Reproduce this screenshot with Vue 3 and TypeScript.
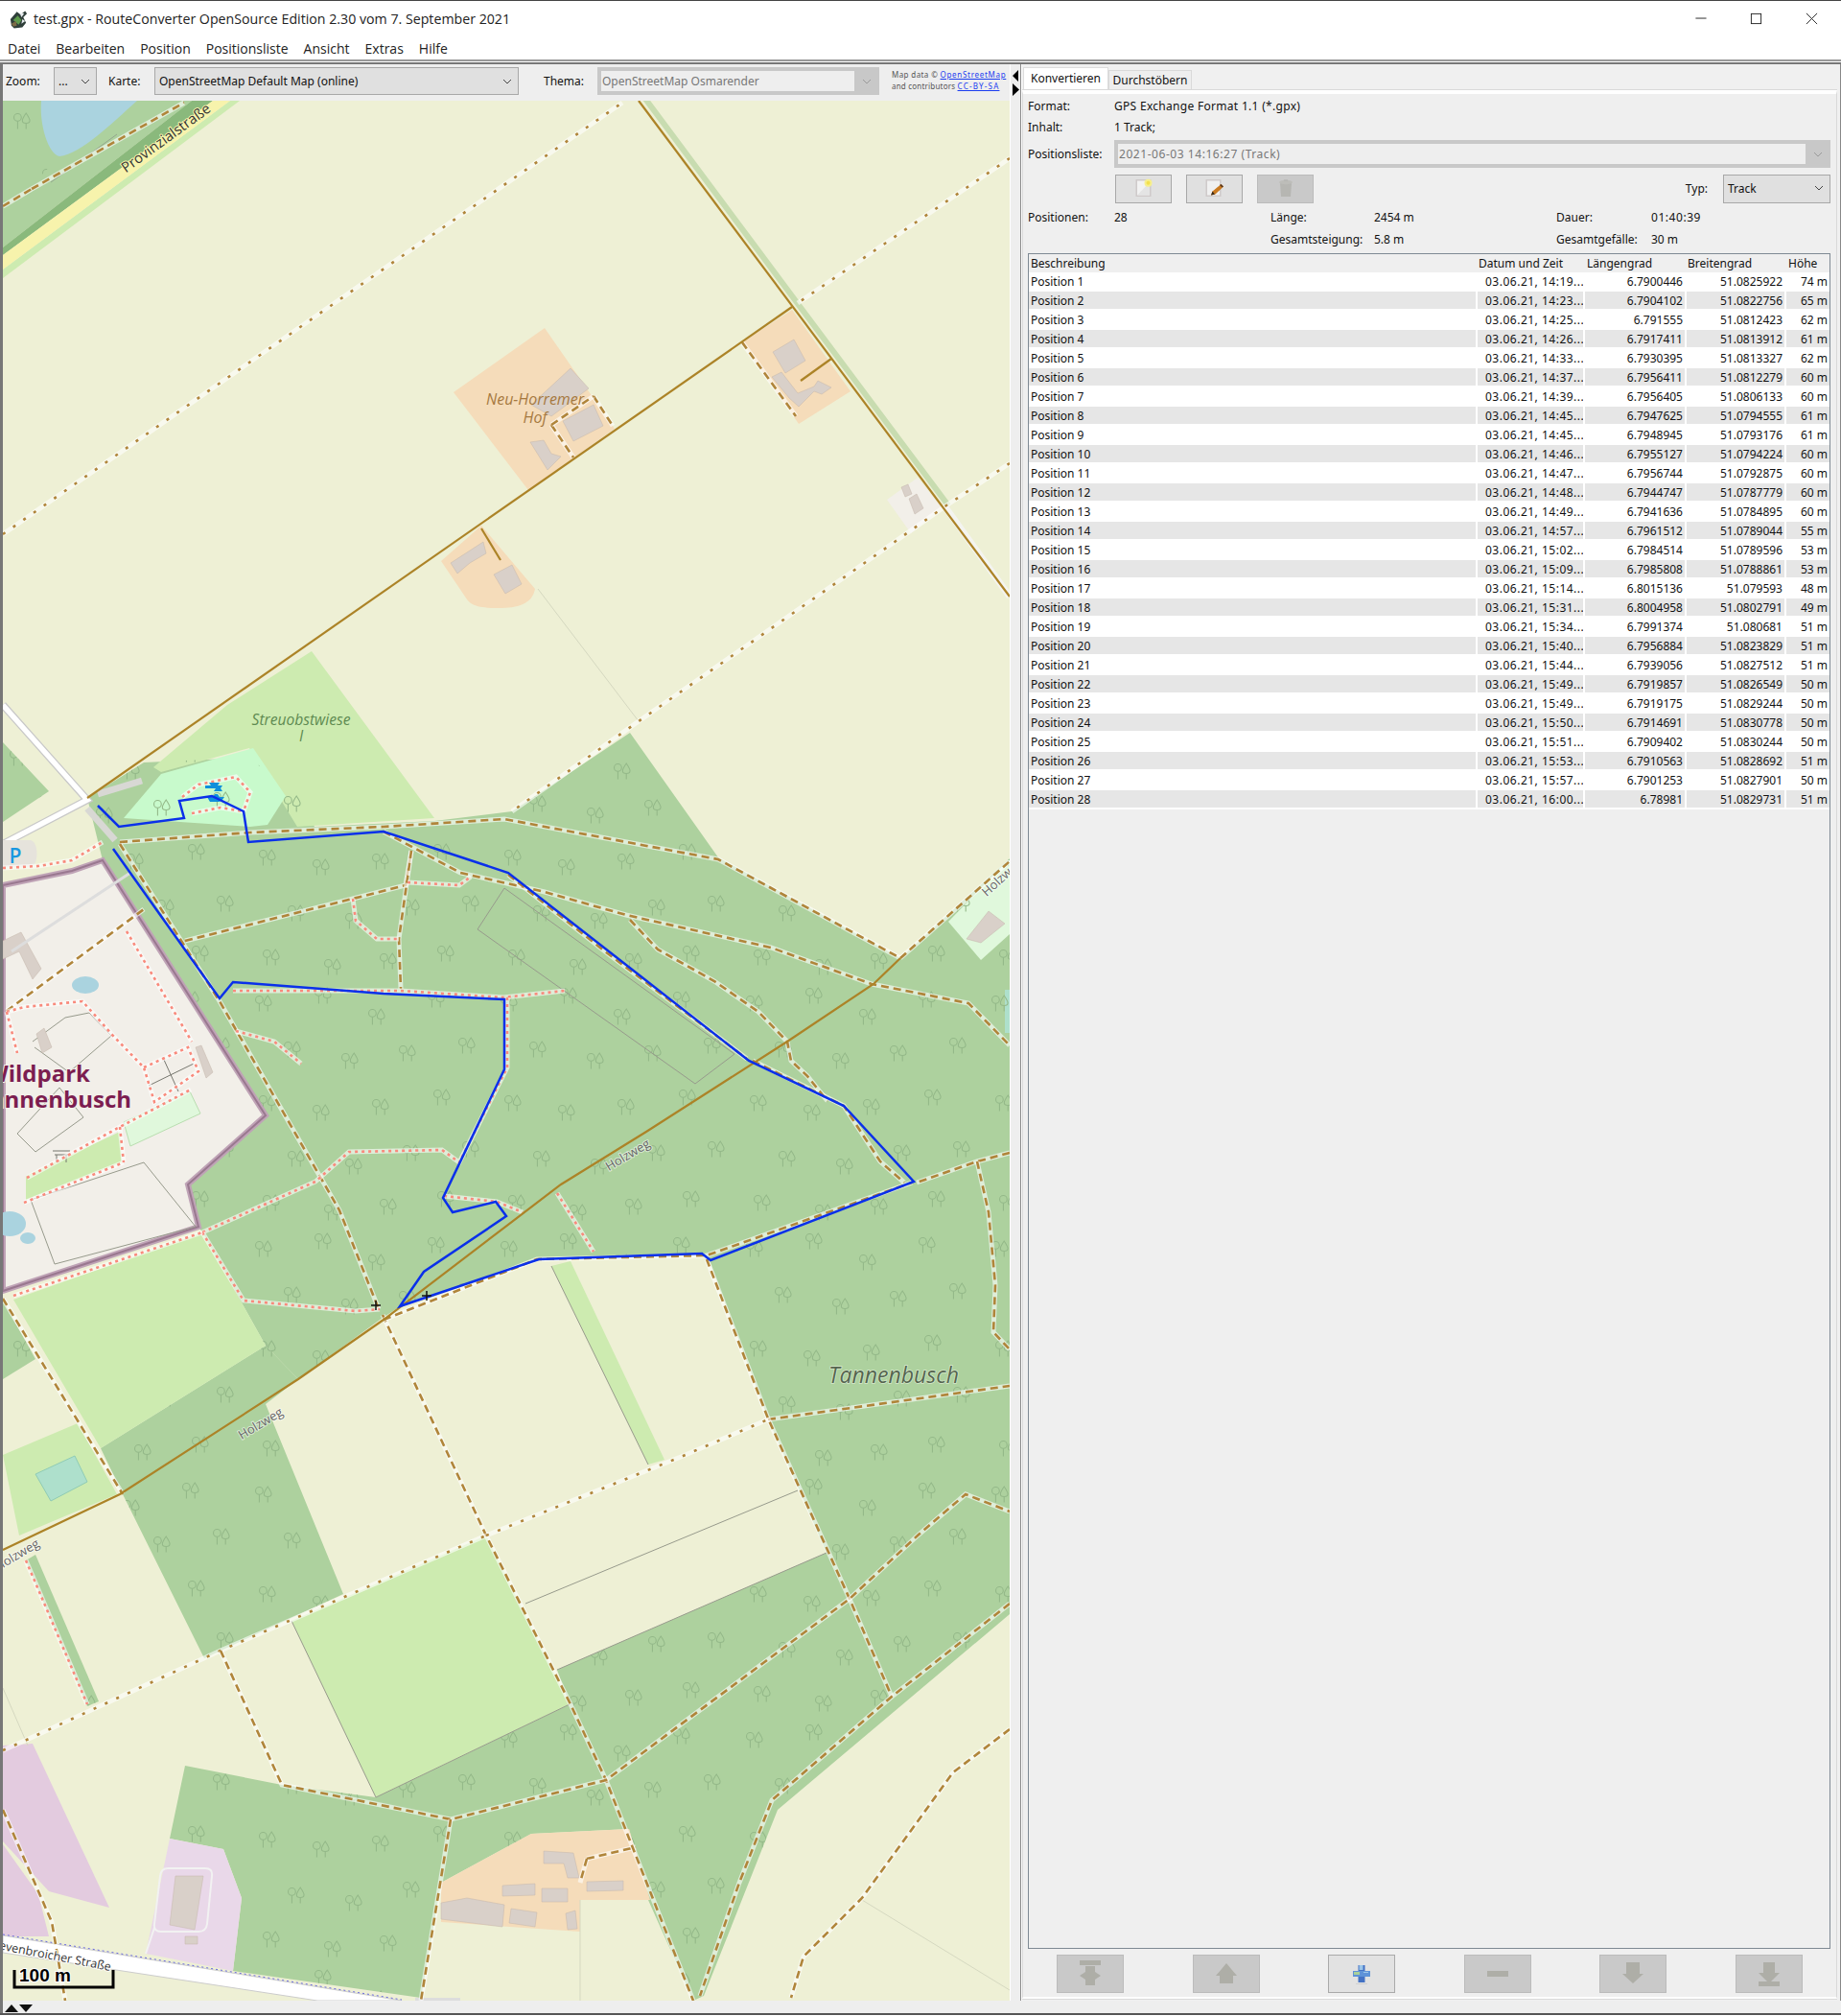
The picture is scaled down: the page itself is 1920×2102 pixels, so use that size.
<script setup lang="ts">
type Row = { name: string; time: string; lon: string; lat: string; ele: string };
type Track = { kind: string; pts: string };

// Position rows as they stand in the list
const raw = `14:19 6.7900446 51.0825922 74
14:23 6.7904102 51.0822756 65
14:25 6.791555 51.0812423 62
14:26 6.7917411 51.0813912 61
14:33 6.7930395 51.0813327 62
14:37 6.7956411 51.0812279 60
14:39 6.7956405 51.0806133 60
14:45 6.7947625 51.0794555 61
14:45 6.7948945 51.0793176 61
14:46 6.7955127 51.0794224 60
14:47 6.7956744 51.0792875 60
14:48 6.7944747 51.0787779 60
14:49 6.7941636 51.0784895 60
14:57 6.7961512 51.0789044 55
15:02 6.7984514 51.0789596 53
15:09 6.7985808 51.0788861 53
15:14 6.8015136 51.079593 48
15:31 6.8004958 51.0802791 49
15:34 6.7991374 51.080681 51
15:40 6.7956884 51.0823829 51
15:44 6.7939056 51.0827512 51
15:49 6.7919857 51.0826549 50
15:49 6.7919175 51.0829244 50
15:50 6.7914691 51.0830778 50
15:51 6.7909402 51.0830244 50
15:53 6.7910563 51.0828692 51
15:57 6.7901253 51.0827901 50
16:00 6.78981 51.0829731 51`;

const rows: Row[] = raw.split("\n").map((line, i) => {
  const [t, lon, lat, ele] = line.split(" ");
  return { name: `Position ${i + 1}`, time: `03.06.21, ${t}...`, lon, lat, ele: `${ele} m` };
});

const menus = ["Datei", "Bearbeiten", "Position", "Positionsliste", "Ansicht", "Extras", "Hilfe"];

// Map geometry, in page pixels (the svg viewBox starts at the map's corner)
const forests = [
  "3,105 200,105 3,258",
  "3,774 51,825 3,857",
  "91,832 150,795 260,790 311,830 328,862 453,856 534,846 657,764 749,894 939,999 1053,895 1053,1683 811,1887 734,2081 723,2086 676,1981 656,1907 554,1912 460,1963 439,2083 243,2055 252,1979 233,1928 177,1917 193,1841 294,1861 392,1874 594,1777 581,1741 862,1619 801,1479 740,1315 733,1308 561,1313 419,1361 399,1374 311,1438 277,1403 211,1285 207,1279 196,1235 277,1163 107,897",
  "105,1510 277,1403 311,1438 277,1464 358,1662 213,1729 128,1558",
  "3,1356 37,1417 3,1438",
  "27,1627 37,1621 103,1774 91,1779",
];
const meadows = [
  "237,735 325,679 453,853 310,862 260,780 168,805 160,800",
  "14,1355 211,1285 277,1403 105,1510",
  "3,1517 81,1484 122,1558 20,1601",
  "304,1690 507,1601 594,1777 392,1874",
  "575,1320 595,1315 693,1522 676,1527",
  "3,281 240,105 250,105 3,290",
];
const yards = [
  "568,342 641,447 551,511 473,409",
  "826,323 887,408 833,442 774,357",
  "460,1963 554,1912 656,1907 678,1981 605,1981 605,2014 460,2004",
];
const buildings = [
  "554,422 595,384 614,405 575,434",
  "587,439 619,422 629,444 598,460",
  "553,461 567,459 575,473 585,476 571,490",
  "806,367 828,354 840,376 819,389",
  "805,393 815,388 832,410 849,403 853,397 867,404 857,411 849,408 833,424 823,415",
  "470,587 504,565 507,577 490,587 477,598",
  "515,599 534,589 544,609 527,619",
  "940,508 947,505 951,515 944,518",
  "948,520 956,515 963,530 954,536",
  "460,1984 487,1979 526,1986 524,2009 460,2001",
  "533,1990 560,1994 558,2009 531,2005",
  "565,1969 592,1969 592,1983 565,1983",
  "524,1966 558,1964 558,1976 524,1977",
  "612,1962 650,1961 650,1971 612,1972",
  "567,1930 598,1932 604,1958 592,1958 588,1943 567,1943",
  "590,1995 600,1992 602,2011 592,2012",
  "183,1956 212,1956 203,2012 177,2007",
  "193,2019 206,2019 206,2027 193,2027",
  "3,981 22,972 43,1010 34,1021 20,992 3,1000",
  "38,1078 46,1072 54,1092 44,1098",
  "204,1092 210,1090 222,1118 215,1124",
  "1008,979 1031,950 1048,963 1023,983",
];
const greyLines = [
  "548,1672 832,1554",
  "581,1741 862,1619",
  "304,1690 392,1874",
  "392,1874 594,1777",
  "575,1320 676,1527",
  "526,926 766,1099 725,1130 498,969 526,926",
  "34,1086 68,1061 93,1056 116,1080 72,1118 36,1092",
  "18,1182 62,1134 87,1165 37,1201 18,1182",
  "32,1251 150,1212 204,1279 57,1318 32,1251",
];
const lightLines = ["561,614 666,752", "899,1981 1053,2075", "605,1981 605,2086", "3,1760 29,1820"];
const solidBrown = [
  "826,320 91,832",
  "666,105 1053,622",
  "939,999 911,1026 821,1086 674,1180 585,1235 400,1376 311,1438 125,1558 3,1616",
  "502,551 522,584",
  "835,397 867,374",
];

function t(kind: string, pts: string): Track {
  return { kind, pts };
}
const tracks: Track[] = [
  t("dot", "3,557 649,107"),
  t("dot", "1053,165 832,316"),
  t("dot", "1053,483 987,527 933,565 659,757 534,846"),
  t("dash", "33,197 192,107"),
  t("dash", "3,215 33,197"),
  t("dash", "619,413 639,444"),
  t("dash", "575,443 598,477"),
  t("dash", "575,443 619,413"),
  t("dash", "774,357 830,434"),
  t("dash", "612,1938 663,1926"),
  t("dash", "612,1938 605,1963"),
  t("dash", "399,1371 507,1601 595,1777 632,1856 723,2086"),
  t("dot", "3,1825 30,1813 230,1721 507,1601"),
  t("dot", "507,1601 710,1519 801,1480"),
  t("dash", "801,1480 1053,1445"),
  t("dash", "737,1313 801,1479 886,1667 930,1769"),
  t("dash", "230,1721 294,1861 470,1897 632,1856 886,1667 957,1601 1007,1558 1053,1576"),
  t("dash", "1053,1672 930,1769 805,1877 771,1963 730,2081"),
  t("dash", "470,1897 439,2086"),
  t("dash", "1053,1803 994,1848 899,1979 838,2040 825,2083"),
  t("dash", "3,1354 128,1558"),
  t("dash", "3,1887 54,2004 68,2086"),
  t("dash", "125,878 261,868 400,862 526,854 749,896 939,999"),
  t("dash", "400,867 480,910 568,930 653,954 804,988 909,1026 1010,1046 1053,1090"),
  t("dash", "530,912 631,992 779,1104"),
  t("dash", "785,1106 880,1153 918,1211 943,1233"),
  t("dash", "657,959 686,990 745,1023 791,1055 821,1086 825,1106 842,1122 863,1148"),
  t("dash", "193,981 368,937 423,923 429,887"),
  t("dash", "429,887 416,979 418,1031"),
  t("dash", "125,880 229,1044 354,1262 395,1365"),
  t("dash", "1053,1202 1019,1211 956,1233"),
  t("dash", "1019,1211 1031,1264 1038,1340 1036,1389 1053,1407"),
  t("dash", "400,1376 560,1313 737,1309 951,1233"),
  t("dash", "939,999 1053,898"),
  t("dash", "7,1054 150,948"),
  t("pink", "243,1033 418,1033 525,1040 589,1033"),
  t("pink", "529,1040 529,1113 479,1212 461,1199 364,1201 329,1232 211,1285"),
  t("pink", "463,1247 518,1253 545,1264"),
  t("pink", "211,1285 254,1356 371,1367 396,1365"),
  t("pink", "581,1244 619,1305"),
  t("pink", "246,1075 286,1086 314,1109"),
  t("pink", "368,937 371,960 393,979 416,979"),
  t("pink", "425,920 479,923 491,914"),
  t("pink", "14,1351 211,1285"),
  t("pink", "27,1627 91,1777"),
  t("pink", "3,905 40,903 75,897 107,878"),
  t("pink", "132,971 200,1086"),
  t("pink", "7,1055 25,1050 86,1044 118,1080 150,1113"),
  t("pink", "7,1055 18,1098"),
  t("pink", "150,1113 196,1092 207,1117 161,1149 150,1113"),
  t("pink", "28,1228 125,1175 199,1136"),
  t("pink", "25,1254 129,1212"),
  t("pink", "125,1175 129,1212"),
  t("pink", "190,831 207,818 246,810 261,826 254,846"),
  t("pink", "200,848 230,842 254,846"),
];

const route =
  "102,840 124,862 192,853 187,835 221,830 254,846 259,878 400,867 530,910 781,1106 880,1153 953,1232 741,1314 732,1307 562,1313 417,1362 442,1326 528,1268 517,1253 472,1264 462,1249 526,1115 526,1042 400,1036 243,1024 229,1041 118,885";

// Positions of the tree pairs inside one forest pattern tile
const trees: [number, number][] = [
  [10, 14], [72, 6], [128, 28], [190, 10], [40, 62], [100, 74], [160, 66], [222, 58],
  [14, 118], [70, 128], [132, 122], [196, 112], [44, 176], [104, 184], [164, 170], [226, 166],
  [18, 222], [82, 232], [140, 226], [200, 218],
];
</script>

<template>
  <div class="window">
    <header class="titlebar">
      <svg class="app-icon" viewBox="0 0 22 20">
        <path d="M2 10 9 2l4 3 5-4 2 3-4 4 3 6-4 5-9 1-3-3z" fill="#2f3f3a" />
        <path d="M5 11l5-5 4 5-3 5z" fill="#5d9a4c" />
        <path d="M12 3l5 1-3 4zM15 10l3 2-4 3z" fill="#e8ecef" />
        <path d="M3 15l5-3 1 5-4 1z" fill="#7b6a45" />
      </svg>
      <span class="title-text">test.gpx - RouteConverter OpenSource Edition 2.30 vom 7. September 2021</span>
      <div class="win-buttons">
        <svg viewBox="0 0 14 14"><path d="M1.500 6.500h12" /></svg>
        <svg viewBox="0 0 14 14"><rect x="1.500" y="1.500" width="11" height="11" /></svg>
        <svg viewBox="0 0 14 14"><path d="M1 1l12 12M13 1L1 13" /></svg>
      </div>
    </header>
    <nav class="menubar">
      <span v-for="m in menus" :key="m">{{ m }}</span>
    </nav>
    <div class="rule"></div>

    <main class="main">
      <section class="map-side">
        <div class="toolbar">
          <span class="lbl zoom-lbl">Zoom:</span>
          <div class="combo zoom-combo">
            <span>...</span>
            <svg class="chev" viewBox="0 0 10 6"><path d="M1 1l4 4 4-4" /></svg>
          </div>
          <span class="lbl karte-lbl">Karte:</span>
          <div class="combo karte-combo">
            <span>OpenStreetMap Default Map (online)</span>
            <svg class="chev" viewBox="0 0 10 6"><path d="M1 1l4 4 4-4" /></svg>
          </div>
          <span class="lbl thema-lbl">Thema:</span>
          <div class="combo off thema-combo">
            <span class="off-text">OpenStreetMap Osmarender</span>
            <svg class="chev" viewBox="0 0 10 6"><path d="M1 1l4 4 4-4" /></svg>
          </div>
          <div class="credits">
            <div><span class="map-data">Map data ©</span> <a>OpenStreetMap</a></div>
            <div>and contributors <a class="cc">CC-BY-SA</a></div>
          </div>
        </div>

        <svg class="map" viewBox="3 105 1050 1981" preserveAspectRatio="none">
          <defs>
            <pattern id="woods" width="256" height="256" patternUnits="userSpaceOnUse">
              <g v-for="(p, i) in trees" :key="i" :transform="`translate(${p[0]} ${p[1]}) scale(1.1)`" class="tree">
                <circle cx="4" cy="4" r="3.500" />
                <path d="M4 7.500V15" />
                <path d="M12 0c-2 3-3.500 5-3.500 7s2 2.500 3.500 2.500 3.500-.5 3.500-2.500S14 3 12 0zM12 9.500V15" />
              </g>
            </pattern>
          </defs>
          <g class="tiles">
            <rect x="3" y="105" width="1050" height="1981" fill="#eef0d5" />

            <polygon v-for="f in forests" :key="f" :points="f" fill="#add19e" />
            <path d="M43 105C41 130 50 160 62 163 85 160 115 130 143 105Z" fill="#aad3df" />
            <polygon v-for="m in meadows" :key="m" :points="m" fill="#cdebb0" />
            <polygon points="264,780 298,830 279,860 261,862 129,853 168,807" fill="#c8facc" />
            <polygon points="989,961 1053,895 1053,974 1023,1001" fill="#e0f8dc" />
            <rect x="1048" y="1032" width="5" height="45" fill="#aee0cc" />
            <polygon v-for="f in forests.slice(1)" :key="'w' + f" :points="f" fill="url(#woods)" />
            <polygon points="3,105 43,105 50,150 62,163 3,225" fill="url(#woods)" />

            <polygon points="3,258 200,105 222,105 3,266" fill="#8ab97c" />
            <polygon points="3,266 222,105 240,105 3,281" fill="#f7f3ac" />
            <polyline points="53,190 122,140" class="thin-line" />

            <polygon points="3,1820 34,1818 114,1989 51,1972 3,1920" fill="#e3cbdf" />
            <polygon points="3,1923 40,1975 51,2019 3,2019" fill="#e3cbdf" />
            <polygon points="177,1917 233,1928 252,1979 243,2055 152,2037" fill="#e9d8e9" />
            <polygon points="37,1537 78,1518 91,1545 53,1565" fill="#aee0cc" stroke="#8fcbb5" />
            <polygon points="957,498 982,529 950,556 925,521" fill="#f2efe9" />
            <path d="M460 585 502 548 558 614C555 630 540 634 520 634 495 634 490 630 485 622Z" fill="#f5dcba" />
            <polygon v-for="y in yards" :key="y" :points="y" fill="#f5dcba" />
            <path d="M175 1948H214Q222 1948 221 1956L216 2006Q215 2014 207 2014H168Q160 2014 161 2006L167 1956Q168 1948 175 1948ZM161 2010 152 2037" class="light-line wide" />

            <!-- Wildpark -->
            <polygon points="3,923 75,908 107,897 277,1163 196,1235 207,1279 3,1346" class="park" />
            <polygon points="3,923 75,908 107,897 277,1163 196,1235 207,1279 3,1346" class="park-edge" />
            <polygon points="3,923 75,908 107,897 277,1163 196,1235 207,1279 3,1346" class="park-core" />
            <ellipse cx="89" cy="1027" rx="14" ry="9" fill="#aad3df" />
            <ellipse cx="10" cy="1276" rx="17" ry="13" fill="#aad3df" />
            <ellipse cx="29" cy="1291" rx="8" ry="6" fill="#aad3df" />
            <polygon points="129,1170 198,1138 209,1161 136,1195" fill="#e0f8dc" stroke="#b9deb0" />
            <polygon points="27,1226 125,1180 127,1212 27,1251" fill="#cdebb0" />

            <polyline v-for="g in greyLines" :key="g" :points="g" class="grey-line" />
            <polyline v-for="l in lightLines" :key="l" :points="l" class="light-line" />
            <polygon v-for="b in buildings" :key="b" :points="b" class="building" />
            <polyline points="12,992 136,910" class="grey-road thin" />
            <path d="M171 1105l15 33M155 1132l47-23" class="grey-dark" />
            <path d="M55 1200h18M57 1204h14M59 1204v8M69 1204v8" class="grey-dark" />

            <!-- Roads -->
            <polyline points="3,735 91,834 3,880" class="road-casing" />
            <polyline points="3,735 91,834 3,880" class="white-road" />
            <polyline points="102,828 148,814" class="grey-road" />
            <polyline points="91,843 120,876" class="grey-road" />
            <path d="M3 876h28c10 0 10 28 0 28H3z" fill="#e6e3dc" />
            <polygon points="3,2018 419,2086 331,2086 3,2036" class="white-poly" />
            <polyline points="3,2017 419,2085" class="boundary" />
            <rect x="433" y="2083" width="47" height="3" fill="#ddd" />
            <polyline points="986,529 1053,622" class="white-edge" />
            <polyline points="670,105 830,320 986,529" class="hedge" />

            <template v-for="tr in tracks" :key="tr.pts">
              <polyline :points="tr.pts" class="casing" />
              <polyline :points="tr.pts" :class="tr.kind" />
            </template>
            <polyline v-for="s in solidBrown" :key="s" :points="s" class="solid" />

            <!-- Viewpoint marker in the park -->
            <path d="M214 819h6l-2-3h11l-2 3h5l-2 3 2 3h-9l2-3h-11zM216 831h6l2-3h3l2 3h5l-3 4-3 1h-9z" fill="#0f8fdb" />
          </g>

          <polyline :points="route" class="route" />
          <path d="M392 1356v10M387 1361h10M445 1346v10M440 1351h10" class="cross" />

          <text x="16" y="900" class="p-sign">P</text>
          <text x="94" y="1128" class="park-name">Wildpark</text>
          <text x="137" y="1155" class="park-name">Tannenbusch</text>
          <text transform="translate(176 148) rotate(-36)" class="road-name">Provinzialstraße</text>
          <text x="558" y="422" class="yard-name">Neu-Horremer</text>
          <text x="558" y="441" class="yard-name">Hof</text>
          <text x="314" y="756" class="green-name">Streuobstwiese</text>
          <text x="314" y="773" class="green-name">I</text>
          <text transform="translate(657 1208) rotate(-31)" class="way-name">Holzweg</text>
          <text transform="translate(274 1488) rotate(-31)" class="way-name">Holzweg</text>
          <text transform="translate(20 1625) rotate(-31)" class="way-name">Holzweg</text>
          <text transform="translate(1048 918) rotate(-42)" class="way-name">Holzweg</text>
          <text x="932" y="1442" class="forest-name">Tannenbusch</text>
          <text transform="translate(115 2055) rotate(11)" class="street-name">Grevenbroicher Straße</text>
          <path d="M15 2054v18h103v-18" class="scale-line" />
          <text x="20" y="2066" class="scale-text">100 m</text>
        </svg>
      </section>

      <div class="splitter">
        <svg viewBox="0 0 8 28">
          <path d="M7 1v12L1 7zM1 15v13l7-6.500z" />
        </svg>
      </div>

      <section class="side">
        <div class="tabs">
          <div class="tab active">Konvertieren</div>
          <div class="tab">Durchstöbern</div>
        </div>
        <div class="tab-body">
          <div class="form-row first"><span class="cap">Format:</span><span class="spaced">GPS Exchange Format 1.1 (*.gpx)</span></div>
          <div class="form-row"><span class="cap">Inhalt:</span><span>1 Track;</span></div>
          <div class="form-row list-row">
            <span class="cap">Positionsliste:</span>
            <div class="combo off list-combo">
              <span class="off-text wide">2021-06-03 14:16:27 (Track)</span>
              <svg class="chev" viewBox="0 0 10 6"><path d="M1 1l4 4 4-4" /></svg>
            </div>
          </div>
          <div class="action-row">
            <button class="tool">
              <svg viewBox="0 0 20 22">
                <path d="M1.500 1h16v18h-16z" fill="#cfcaca" />
                <path d="M3 2.500h13v15H3z" fill="#f2f2f2" />
                <path d="M3 17.500 16 4v13.500z" fill="#e4e4e4" />
                <circle cx="14.500" cy="4.700" r="4" fill="#f6ef8c" />
                <circle cx="14.500" cy="4.700" r="2" fill="#f3e04e" />
              </svg>
            </button>
            <button class="tool">
              <svg viewBox="0 0 20 22">
                <path d="M.5 1h16v18H.5z" fill="#cfcaca" />
                <path d="M2 2.500h13v15H2z" fill="#f0f0f0" />
                <path d="M6 17.500l1.500-4 9-7.500 2.500 2.500-8.500 8z" fill="#c9791f" />
                <path d="M6 17.500l1.500-4 2.500 3z" fill="#3a2a1a" />
                <path d="M16.500 6l2.500 2.500-1.500 1-2.500-2.500z" fill="#5a3a20" />
              </svg>
            </button>
            <button class="tool off-tool">
              <svg viewBox="0 0 20 22">
                <path d="M4 5h12l-1 14H5z" fill="#b6b6b2" />
                <ellipse cx="10" cy="4" rx="7" ry="2.200" fill="#bdbdb9" />
                <path d="M8 2.500h4v-1H8z" fill="#b0b0ac" />
              </svg>
            </button>
            <span class="typ">Typ:</span>
            <div class="combo typ-combo">
              <span>Track</span>
              <svg class="chev" viewBox="0 0 10 6"><path d="M1 1l4 4 4-4" /></svg>
            </div>
          </div>
          <div class="stats">
            <span>Positionen:</span><span>28</span><span>Länge:</span><span>2454 m</span><span>Dauer:</span><span class="wide">01:40:39</span>
            <span></span><span></span><span>Gesamtsteigung:</span><span>5.8 m</span><span>Gesamtgefälle:</span><span>30 m</span>
          </div>

          <div class="table">
            <div class="thead">
              <span class="h-desc">Beschreibung</span>
              <span class="h-date">Datum und Zeit</span>
              <span class="h-lon">Längengrad</span>
              <span class="h-lat">Breitengrad</span>
              <span class="h-ele">Höhe</span>
            </div>
            <div v-for="(r, i) in rows" :key="r.name" class="trow" :class="{ odd: i % 2 === 1 }">
              <span class="c-desc">{{ r.name }}</span>
              <span class="c-date">{{ r.time }}</span>
              <span class="c-num">{{ r.lon }}</span>
              <span class="c-num">{{ r.lat }}</span>
              <span class="c-num">{{ r.ele }}</span>
            </div>
          </div>

          <div class="footer-tools">
            <button class="big off-tool">
              <svg viewBox="0 0 24 40"><path d="M1 6h22v5H1zM7 12h10v6l6 4-6 4v6H7v-6l-6-4 6-4z" fill="#aeaea7" /></svg>
            </button>
            <button class="big off-tool">
              <svg viewBox="0 0 24 40"><path d="M12 9l11 13h-4v8H5v-8H1z" fill="#aeaea7" /></svg>
            </button>
            <button class="big live">
              <svg viewBox="0 0 24 40">
                <path d="M8.500 11h7v18h-7z" fill="#4472c4" />
                <path d="M3 17h18v6H3z" fill="#5f93d8" />
                <path d="M4 18h6v3H4z" fill="#a8d09a" />
                <path d="M14 18h5v1h-5zM9.500 11h4v5h-4z" fill="#9cc6ea" />
                <path d="M6 30h12v1H6z" fill="#cfcfcf" />
              </svg>
            </button>
            <button class="big off-tool">
              <svg viewBox="0 0 24 40"><path d="M1 17h22v6H1z" fill="#aeaea7" /></svg>
            </button>
            <button class="big off-tool">
              <svg viewBox="0 0 24 40"><path d="M5 8h14v12h4L12 30 1 20h4z" fill="#aeaea7" /></svg>
            </button>
            <button class="big off-tool">
              <svg viewBox="0 0 24 40"><path d="M6 8h12v11h5l-7 7-2 2h-4l-2-2-7-7h5zM1 28h22v5H1z" fill="#aeaea7" /></svg>
            </button>
          </div>
        </div>
      </section>
    </main>

    <div class="status">
      <svg viewBox="0 0 30 8"><path d="M0 8l7-8 7 8zM15 0h14l-7 8z" /></svg>
    </div>
    <div class="status-end"></div>
  </div>
</template>

<style scoped>
.window {
  width: 1920px;
  height: 2102px;
  display: flex;
  flex-direction: column;
  background: #fff;
  font-family: "Noto Sans", sans-serif;
  font-size: 12px;
  color: #111;
  overflow: hidden;
}
.titlebar {
  height: 37px;
  flex: none;
  display: flex;
  align-items: center;
  border-top: 1px solid #444;
  padding-left: 9px;
  font-family: "Open Sans", sans-serif;
  font-size: 14.200px;
  color: #222;
  box-sizing: content-box;
  position: relative;
}
.app-icon {
  width: 21px;
  height: 20px;
  margin-right: 5px;
}
.win-buttons {
  margin-left: auto;
  display: flex;
  gap: 45px;
  padding-right: 24px;
}
.win-buttons svg {
  width: 13px;
  height: 13px;
  fill: none;
  stroke: #222;
  stroke-width: 1;
}
.menubar {
  height: 24px;
  flex: none;
  display: flex;
  align-items: center;
  gap: 16px;
  padding-left: 8px;
  font-family: "Open Sans", sans-serif;
  font-size: 14px;
  color: #222;
}
.rule {
  height: 1px;
  flex: none;
  border-top: 2px solid #999;
  border-bottom: 2px solid #777;
  box-sizing: content-box;
}
.main {
  flex: 1;
  min-height: 0;
  display: flex;
  background: #eee;
  border-left: 3px solid #777;
  border-right: 1px solid #888;
}
.map-side {
  width: 1050px;
  flex: none;
  display: flex;
  flex-direction: column;
}
.toolbar {
  height: 38px;
  flex: none;
  display: flex;
  align-items: flex-start;
  padding-top: 3px;
  box-sizing: border-box;
  line-height: 29px;
}
.lbl {
  flex: none;
}
.zoom-lbl {
  margin-left: 3px;
  width: 50px;
}
.karte-lbl {
  margin-left: 12px;
  width: 48px;
}
.thema-lbl {
  margin-left: 26px;
  width: 56px;
}
.combo {
  height: 29px;
  box-sizing: border-box;
  flex: none;
  display: flex;
  align-items: center;
  justify-content: space-between;
  background: #e0e0e0;
  border: 1px solid #a8a8a8;
  padding: 0 6px 0 4px;
}
.chev {
  width: 10px;
  height: 6px;
  fill: none;
  stroke: #444;
  stroke-width: 1;
  flex: none;
}
.zoom-combo {
  width: 45px;
}
.karte-combo {
  width: 380px;
}
.thema-combo {
  width: 294px;
  margin-right: 13px;
}
.combo.off {
  background: #c8c8c8;
  border: 0;
  padding: 4px 8px 4px 4px;
}
.combo.off .chev {
  stroke: #9a9a9a;
}
.off-text {
  flex: 1;
  height: 100%;
  display: flex;
  align-items: center;
  background: #eee;
  color: #777;
  padding-left: 1px;
  margin-right: 8px;
}
.spaced {
  letter-spacing: 0.3px;
}
.wide {
  letter-spacing: 0.55px;
}
.credits {
  font-size: 8px;
  line-height: 12px;
  color: #555;
  white-space: nowrap;
  letter-spacing: 0.2px;
  margin-top: 2px;
}
.map-data {
  letter-spacing: 0.4px;
}
.credits a {
  color: #1a3cf0;
  text-decoration: underline;
  letter-spacing: 0.7px;
}
.credits a.cc {
  letter-spacing: 1.200px;
}
.map {
  display: block;
  width: 1050px;
  height: 1981px;
  flex: none;
  background: #eef0d5;
  font-family: "Open Sans", sans-serif;
}
.tiles {
  filter: blur(0.5px);
}
.tree {
  fill: none;
  stroke: #93b888;
  stroke-width: 1;
}
.park {
  fill: #f2efe9;
}
.park-edge {
  fill: none;
  stroke: #bfa3b6;
  stroke-width: 6;
}
.park-core {
  fill: none;
  stroke: #9a7890;
  stroke-width: 2;
}
.building {
  fill: #d9d0c9;
  stroke: #c4b6ab;
  stroke-width: 0.500;
}
.grey-line {
  fill: none;
  stroke: #979a8c;
  stroke-width: 1;
}
.grey-dark {
  fill: none;
  stroke: #77776f;
  stroke-width: 1;
}
.light-line {
  fill: none;
  stroke: #d5d8c0;
  stroke-width: 1;
}
.light-line.wide {
  stroke: #f2f2f2;
  stroke-width: 2;
}
.casing {
  fill: none;
  stroke: #fff;
  stroke-opacity: 0.6;
  stroke-width: 5;
}
.dash,
.dot,
.pink,
.solid {
  fill: none;
}
.dash {
  stroke: #b0853a;
  stroke-width: 2.600;
  stroke-dasharray: 8 5;
}
.dot {
  stroke: #b0853a;
  stroke-width: 2.600;
  stroke-dasharray: 3 10;
}
.pink {
  stroke: #f98a7c;
  stroke-width: 2.600;
  stroke-dasharray: 3 4;
}
.solid {
  stroke: #ac8327;
  stroke-width: 2.200;
}
.thin-line {
  fill: none;
  stroke: #8d9a8a;
  stroke-width: 0.800;
}
.road-casing {
  fill: none;
  stroke: #c8c8c8;
  stroke-width: 8;
}
.white-road {
  fill: none;
  stroke: #fff;
  stroke-width: 5.500;
}
.grey-road {
  fill: none;
  stroke: #d8d8d4;
  stroke-width: 7;
}
.grey-road.thin {
  stroke: #ddd;
  stroke-width: 3;
}
.white-poly {
  fill: #fff;
  stroke: #ccc;
}
.boundary {
  fill: none;
  stroke: #6a6ae0;
  stroke-dasharray: 2 3;
  stroke-width: 1;
}
.white-edge {
  fill: none;
  stroke: #f4f4f0;
  stroke-width: 7;
}
.hedge {
  fill: none;
  stroke: #c8dcb0;
  stroke-width: 6;
  transform: translate(3px, -2px);
}
.route {
  fill: none;
  stroke: #0a30ea;
  stroke-width: 2.500;
  stroke-linejoin: miter;
}
.cross {
  fill: none;
  stroke: #111;
  stroke-width: 1.500;
}
.p-sign {
  font-size: 21px;
  fill: #1a98e0;
  font-weight: 600;
  text-anchor: middle;
}
.park-name {
  font-size: 24px;
  font-weight: 700;
  fill: #7c1d50;
  text-anchor: end;
  paint-order: stroke;
  stroke: #f2efe9;
  stroke-width: 2;
}
.road-name {
  font-size: 14.800px;
  fill: #333;
  text-anchor: middle;
  paint-order: stroke;
  stroke: #f7f3ac;
  stroke-width: 2;
}
.yard-name {
  font-size: 16px;
  font-style: italic;
  fill: #a6793f;
  text-anchor: middle;
}
.green-name {
  font-size: 15.600px;
  font-style: italic;
  fill: #5e8a50;
  text-anchor: middle;
}
.way-name {
  font-size: 13px;
  fill: #666;
  text-anchor: middle;
  paint-order: stroke;
  stroke: #fff;
  stroke-width: 2;
  stroke-opacity: 0.55;
}
.forest-name {
  font-size: 23px;
  font-style: italic;
  fill: #55654f;
  text-anchor: middle;
  paint-order: stroke;
  stroke: #d6e8cc;
  stroke-width: 1.500;
}
.street-name {
  font-size: 12.500px;
  fill: #333;
  text-anchor: end;
  paint-order: stroke;
  stroke: #fff;
  stroke-width: 2;
}
.scale-line {
  fill: none;
  stroke: #000;
  stroke-width: 3;
}
.scale-text {
  font-family: "Liberation Sans", sans-serif;
  font-size: 19px;
  font-weight: 700;
  fill: #000;
  paint-order: stroke;
  stroke: #fff;
  stroke-width: 2;
}
.splitter {
  width: 11px;
  flex: none;
  padding-top: 5px;
  box-sizing: border-box;
  background: #eee;
  border-left: 1px solid #fff;
}
.splitter svg {
  width: 8px;
  height: 28px;
  display: block;
  margin-left: 1px;
  fill: #000;
}
.side {
  flex: 1;
  min-width: 0;
  display: flex;
  flex-direction: column;
  border-left: 1px solid #8a8a8a;
  background: #f0f0f0;
  padding-left: 1px;
  box-shadow: inset 1px 0 0 #fff;
}
.tabs {
  height: 25px;
  flex: none;
  display: flex;
  align-items: flex-end;
  padding-left: 1px;
  padding-top: 2px;
}
.tab {
  width: 87px;
  height: 21px;
  box-sizing: border-box;
  display: flex;
  align-items: center;
  justify-content: center;
  background: #eee;
  border: 1px solid #d9d9d9;
  border-bottom: 0;
  padding-bottom: 2px;
}
.tab.active {
  width: 89px;
  height: 24px;
  background: #fff;
  border-color: #ddd;
}
.tab-body {
  flex: 1;
  min-height: 0;
  display: flex;
  flex-direction: column;
  background: #efefef;
  border: 1px solid #d9d9d9;
  border-top: 4px solid #fff;
  border-bottom: 2px solid #fff;
  margin: 0 3px 2px 0;
  padding: 1px 6px 4px 5px;
  box-shadow: 0 -1px 0 #d9d9d9, 0 1px 0 #d9d9d9;
}
.form-row {
  height: 22px;
  flex: none;
  display: flex;
  align-items: center;
}
.cap {
  width: 90px;
  flex: none;
}
.list-row {
  height: 29px;
  margin-top: 3px;
}
.list-combo {
  width: 747px;
}
.action-row {
  height: 30px;
  flex: none;
  margin-top: 7px;
  display: flex;
  align-items: center;
  padding-left: 91px;
}
.tool {
  width: 59px;
  height: 30px;
  margin-right: 15px;
  padding: 0;
  display: flex;
  align-items: center;
  justify-content: center;
  background: #e0e0e0;
  border: 1px solid #a8a8a8;
}
.tool svg {
  width: 20px;
  height: 22px;
}
.off-tool {
  background: #c9c9c9;
  border-color: #bbb;
}
.typ {
  margin-left: auto;
  margin-right: 16px;
  margin-bottom: 2px;
}
.typ-combo {
  width: 112px;
  height: 30px;
  padding-right: 6px;
  padding-bottom: 2px;
}
.stats {
  flex: none;
  margin-top: 3px;
  display: grid;
  grid-template-columns: 90px 163px 108px 190px 99px 1fr;
  grid-auto-rows: 23px;
  align-items: center;
}
.table {
  flex: 1;
  min-height: 0;
  margin-top: 3px;
  border: 1px solid #7f8a94;
  background: #efefef;
  overflow: hidden;
}
.thead {
  height: 19px;
  display: grid;
  grid-template-columns: 466px 110px 104px 102px 45px;
  column-gap: 2px;
  align-items: center;
}
.h-desc,
.h-lon,
.h-ele {
  padding-left: 2px;
}
.h-date,
.h-lat {
  padding-left: 1px;
}
.trow {
  height: 18px;
  padding-bottom: 2px;
  background: #fff;
  display: grid;
  grid-template-columns: 466px 110px 104px 102px 45px;
  column-gap: 2px;
}
.trow > span {
  line-height: 20px;
  white-space: nowrap;
  overflow: hidden;
}
.trow.odd > span {
  background: #e6e6e6;
}
.c-desc {
  padding-left: 2px;
}
.c-date {
  padding-left: 8px;
  letter-spacing: 0.5px;
}
.c-num {
  text-align: right;
  padding-right: 2px;
}
.footer-tools {
  height: 40px;
  flex: none;
  margin-top: 6px;
  display: flex;
  justify-content: space-between;
  padding: 0 29px 0 30px;
}
.big {
  width: 70px;
  height: 40px;
  padding: 0;
  display: flex;
  align-items: center;
  justify-content: center;
  background: #e2e2e2;
  border: 1px solid #aaa;
}
.big.off-tool {
  background: #c9c9c9;
  border-color: #bbb;
}
.big svg {
  width: 24px;
  height: 40px;
}
.status {
  height: 13px;
  flex: none;
  background: #eee;
  border-left: 3px solid #777;
  padding: 4px 0 0 2px;
  box-sizing: border-box;
}
.status svg {
  display: block;
  width: 30px;
  height: 8px;
  fill: #111;
}
.status-end {
  height: 1px;
  flex: none;
  border-top: 2px solid #555;
  background: #fff;
  box-sizing: content-box;
}
</style>

<style>
html,
body {
  margin: 0;
  background: #fff;
}
</style>
